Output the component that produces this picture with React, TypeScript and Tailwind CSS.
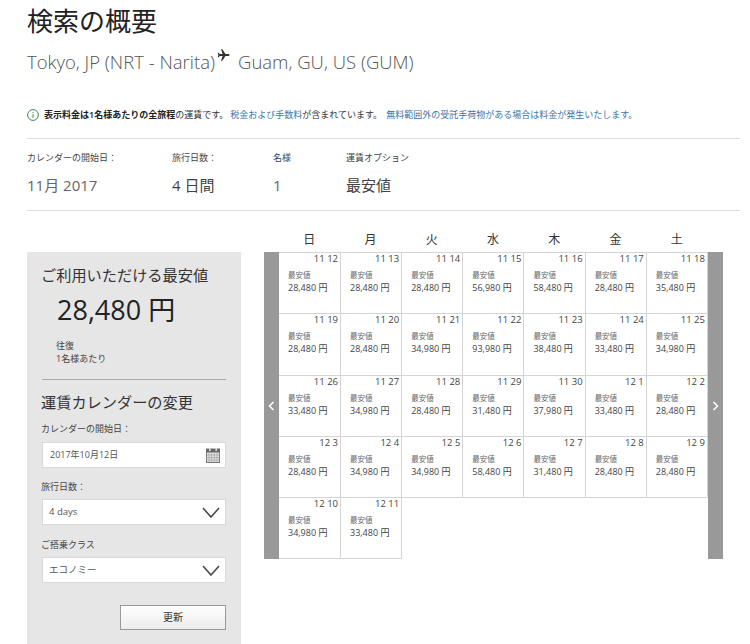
import React from "react";

const font = { fontFamily: '"Open Sans", "Noto Sans CJK JP", sans-serif' };

const days = ["日", "月", "火", "水", "木", "金", "土"];
const cells: [string, string][] = [
  ["11 12", "28,480"], ["11 13", "28,480"], ["11 14", "28,480"], ["11 15", "56,980"], ["11 16", "58,480"], ["11 17", "28,480"], ["11 18", "35,480"],
  ["11 19", "28,480"], ["11 20", "28,480"], ["11 21", "34,980"], ["11 22", "93,980"], ["11 23", "38,480"], ["11 24", "33,480"], ["11 25", "34,980"],
  ["11 26", "33,480"], ["11 27", "34,980"], ["11 28", "28,480"], ["11 29", "31,480"], ["11 30", "37,980"], ["12 1", "33,480"], ["12 2", "28,480"],
  ["12 3", "28,480"], ["12 4", "34,980"], ["12 5", "34,980"], ["12 6", "58,480"], ["12 7", "31,480"], ["12 8", "28,480"], ["12 9", "28,480"],
  ["12 10", "34,980"], ["12 11", "33,480"],
];

function Chevron() {
  return (
    <svg width="18" height="11" viewBox="0 0 18 11" fill="none" stroke="#4a4a4a" strokeWidth="1.6">
      <path d="M1 1l8 9 8-9" />
    </svg>
  );
}

function CalIcon() {
  return (
    <svg width="14" height="15" viewBox="0 0 14 15">
      <rect x="0.5" y="1" width="13" height="13.5" fill="#e4e4e4" stroke="#777" />
      <rect x="0.5" y="1" width="13" height="3.5" fill="#666" />
      <path d="M0 7h14M0 9.5h14M0 12h14M3 5v9M5.7 5v9M8.4 5v9M11 5v9" stroke="#999" strokeWidth="0.6" />
      <rect x="3" y="0" width="1.6" height="3" fill="#ddd" />
      <rect x="9.4" y="0" width="1.6" height="3" fill="#ddd" />
    </svg>
  );
}

function Select({ label }: { label: string }) {
  return (
    <div className="mt-[5.5px] h-[26px] bg-white border border-[#d9d9d9] flex items-center justify-between pl-[6px] pr-[5px] text-[9.5px] text-[#555]">
      <span>{label}</span>
      <Chevron />
    </div>
  );
}

function Cell({ date, price }: { date: string; price: string }) {
  return (
    <div className="h-[61.3px] bg-white border-r border-b border-[#d4d4d4] pl-[9px] pr-[2px] text-[#444]">
      <div className="text-right text-[9.5px] leading-[12px] text-[#444]">{date}</div>
      <div className="mt-[5px] text-[7.5px] leading-[10px] text-[#666]">最安値</div>
      <div className="mt-[1px] text-[9px] leading-[14px] text-[#444]">{price} 円</div>
    </div>
  );
}

function Bar({ dir }: { dir: "left" | "right" }) {
  return (
    <div className="w-[15px] bg-[#999999] flex items-center justify-center">
      <svg width="7" height="10" viewBox="0 0 7 10" fill="none" stroke="white" strokeWidth="1.5">
        <path d={dir === "left" ? "M5.5 1L1.5 5l4 4" : "M1.5 1l4 4-4 4"} />
      </svg>
    </div>
  );
}

export default function App() {
  return (
    <div className="w-[750px] h-[644px] overflow-hidden bg-white pl-[27px] pr-[10px] text-[#222]" style={font}>
      <h1 className="pt-[2px] text-[26px] leading-[38px] font-normal text-[#222]">検索の概要</h1>
      <div className="mt-[9px] flex items-start text-[18.5px] leading-[26px] font-light text-[#555] h-[26px]">
        <span>Tokyo, JP (NRT - Narita)</span>
        <svg className="ml-[2px] mr-[7px] mt-[-1px]" width="14" height="14" viewBox="0 0 24 24" fill="#333">
          <path d="M21.5 12c0-1-.9-1.6-1.8-1.6h-5.2L9.2 2H7l2.6 8.4H4.6L3 8.2H1.2L2.4 12 1.2 15.8H3l1.6-2.2h5L7 22h2.2l5.3-8.4h5.2c.9 0 1.8-.6 1.8-1.6z" />
        </svg>
        <span>Guam, GU, US (GUM)</span>
      </div>

      <div className="mt-[32px] flex items-center h-[16px] text-[9px] whitespace-nowrap">
        <svg className="mr-[5px] shrink-0" width="12" height="12" viewBox="0 0 12 12" fill="none" stroke="#3c8a4e">
          <circle cx="6" cy="6" r="5.4" />
          <path d="M6 5.2v3.6M6 3v1.2" />
        </svg>
        <span className="font-semibold text-[#222]">表示料金は1名様あたりの全旅程</span>
        <span className="text-[#333]">の運賃です。</span>
        <span className="ml-[2px] text-[#3a76a8]">税金および手数料</span>
        <span className="text-[#333]">が含まれています。</span>
        <span className="ml-[4px] text-[#3a76a8]">無料範囲外の受託手荷物がある場合は料金が発生いたします。</span>
      </div>

      <div className="mt-[15px] border-t border-[#dcdcdc] h-[72px] flex pt-[12px]">
        <div className="w-[145px]">
          <div className="text-[9px] leading-[14px] text-[#444]">カレンダーの開始日：</div>
          <div className="mt-[10px] text-[15px] leading-[20px] text-[#666]">11月 2017</div>
        </div>
        <div className="w-[101px]">
          <div className="text-[9px] leading-[14px] text-[#444]">旅行日数：</div>
          <div className="mt-[10px] text-[15px] leading-[20px] text-[#444]">4 日間</div>
        </div>
        <div className="w-[73px]">
          <div className="text-[9px] leading-[14px] text-[#444]">名様</div>
          <div className="mt-[10px] text-[15px] leading-[20px] text-[#666]">1</div>
        </div>
        <div>
          <div className="text-[9px] leading-[14px] text-[#444]">運賃オプション</div>
          <div className="mt-[10px] text-[15px] leading-[20px] text-[#444]">最安値</div>
        </div>
      </div>
      <div className="border-t border-[#dcdcdc]" />

      <div className="mt-[41px] flex items-start">
        <aside className="w-[214px] h-[392px] bg-[#e6e6e6] pl-[14px] pr-[15px] pt-[12px] shrink-0">
          <div className="text-[15.2px] leading-[22px] text-[#333] whitespace-nowrap">ご利用いただける最安値</div>
          <div className="mt-[6px] ml-[16px] text-[27px] leading-[36px] text-[#222]">28,480 円</div>
          <div className="mt-[11px] ml-[15px] text-[9px] leading-[13px] text-[#444]">
            <div>往復</div>
            <div>1名様あたり</div>
          </div>
          <div className="mt-[14px] ml-[1px] border-t border-[#aaaaaa]" />
          <div className="mt-[11px] text-[15.2px] leading-[22px] text-[#333] whitespace-nowrap">運賃カレンダーの変更</div>
          <div className="mt-[9px] text-[9px] leading-[14px] text-[#444]">カレンダーの開始日：</div>
          <div className="mt-[6px] ml-[1px] h-[26px] bg-white border border-[#d9d9d9] flex items-center justify-between pl-[7px] pr-[5px] text-[9px] text-[#555]">
            <span>2017年10月12日</span>
            <CalIcon />
          </div>
          <div className="mt-[11.5px] text-[9px] leading-[14px] text-[#444]">旅行日数：</div>
          <div className="ml-[1px]"><Select label="4 days" /></div>
          <div className="mt-[12.5px] text-[9px] leading-[14px] text-[#444]">ご搭乗クラス</div>
          <div className="ml-[1px]"><Select label="エコノミー" /></div>
          <div className="mt-[21.5px] flex justify-end">
            <button className="w-[106px] h-[25px] border border-[#999999] bg-gradient-to-b from-white to-[#ececec] text-[10px] text-[#333]">更新</button>
          </div>
        </aside>

        <div className="ml-[23px] mt-[-27px]">
          <div className="ml-[15px] w-[429px] grid grid-cols-7 h-[27px] pt-[2px] text-[12px] text-[#333]">
            {days.map((d) => (
              <div key={d} className="flex items-center justify-center pr-[1px]">{d}</div>
            ))}
          </div>
          <div className="flex h-[307px]">
            <Bar dir="left" />
            <div className="w-[429px] grid grid-cols-[62px_repeat(6,61.17px)] content-start border-t border-[#d4d4d4]">
              {cells.map(([d, p]) => (
                <Cell key={d} date={d} price={p} />
              ))}
            </div>
            <Bar dir="right" />
          </div>
        </div>
      </div>
    </div>
  );
}
